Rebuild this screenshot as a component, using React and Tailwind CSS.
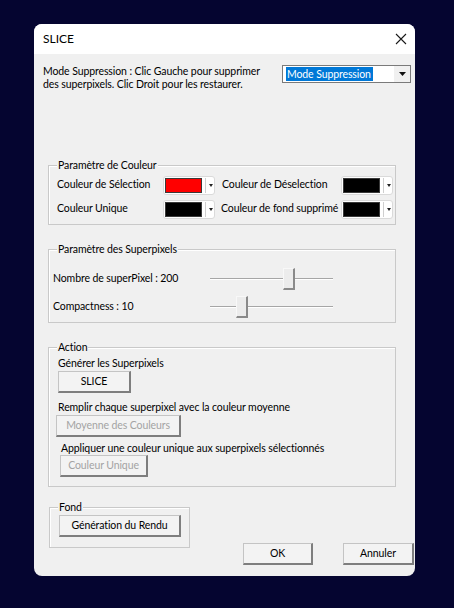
const Btn = ({ children, disabled, className = '' }) => (
  <div
    className={`h-[22px] flex items-center justify-center bg-[#f3f3f3] border-t border-l border-[#c4c4c4] border-r-2 border-b-2 border-r-[#7e7e7e] border-b-[#7e7e7e] ${disabled ? 'text-[#a3a3a3]' : 'text-black'} ${className}`}
  >
    {children}
  </div>
)

const Group = ({ title, className = '', children }) => (
  <div className={`relative border border-[#c9c9c9] shadow-[inset_1px_1px_0_#ffffff] ${className}`}>
    <span className="absolute -top-[7px] left-[8px] px-[1px] leading-[13px] bg-[#f0f0f0] whitespace-nowrap">
      {title}
    </span>
    {children}
  </div>
)

const Swatch = ({ color }) => (
  <div className="w-[52px] h-[19px] bg-white border border-[#dadada] rounded-[3px] flex items-center pl-[1px]">
    <div className={`w-[37px] h-[15px] border border-[#3a3a3a] ${color}`} />
    <div className="ml-[3px] w-px h-[15px] bg-[#cfcfcf]" />
    <svg width="4" height="3" viewBox="0 0 4 3" className="ml-[3px]">
      <path d="M0 0h4L2 3z" fill="#222" />
    </svg>
  </div>
)

const Slider = ({ thumb }) => (
  <div className="relative w-[123px] h-[22px] flex items-center">
    <div className="w-full h-[2px] border-t border-[#a6a6a6] border-b border-b-white" />
    <div
      className={`absolute top-0 ${thumb} w-[12px] h-[22px] bg-[#ececec] border-t border-l border-[#f8f8f8] border-r-2 border-b-2 border-r-[#8a8a8a] border-b-[#8a8a8a]`}
    />
  </div>
)

export default function App() {
  return (
    <div className="w-[454px] h-[608px] bg-[#050530] pt-[24px] pl-[34px] font-[Lato,sans-serif] text-[10.5px] tracking-[-0.1px] text-black">
      <div className="w-[381px] h-[552px] rounded-[8px] bg-[#f0f0f0] overflow-hidden flex flex-col">
        {/* Title bar */}
        <div className="h-[30px] shrink-0 bg-white flex items-center justify-between pl-[9px] pr-[8px]">
          <span className="text-[12px] tracking-normal">SLICE</span>
          <svg width="12" height="12" viewBox="0 0 12 12">
            <path d="M1 1L11 11M11 1L1 11" stroke="#1a1a1a" strokeWidth="1.1" />
          </svg>
        </div>

        <div className="flex flex-col pt-[11px]">
          {/* Mode row */}
          <div className="flex items-start pl-[9px] h-[26px]">
            <p className="w-[239px] leading-[13px] whitespace-nowrap">
              Mode Suppression : Clic Gauche pour supprimer
              <br />
              des superpixels. Clic Droit pour les restaurer.
            </p>
            <div className="w-[129px] h-[18px] bg-white border border-[#7a7a7a] flex items-center">
              <span className="ml-[3px] w-[87px] pl-[1px] leading-[14px] bg-[#0078d7] text-white whitespace-nowrap">
                Mode Suppression
              </span>
              <div className="ml-auto w-[16px] h-full bg-[#f0f0f0] flex items-center justify-center">
                <svg width="7" height="4" viewBox="0 0 7 4">
                  <path d="M0 0h7L3.5 4z" fill="#111" />
                </svg>
              </div>
            </div>
          </div>

          {/* Couleur */}
          <Group title="Paramètre de Couleur" className="mt-[74px] ml-[14px] w-[348px] h-[60px]">
            <div className="grid grid-cols-[106px_59px_119px_52px] auto-rows-[24px] items-center pt-[7px] pl-[8px]">
              <span className="whitespace-nowrap">Couleur de Sélection</span>
              <Swatch color="bg-[#ff0000]" />
              <span className="whitespace-nowrap">Couleur de Déselection</span>
              <Swatch color="bg-black" />
              <span className="whitespace-nowrap">Couleur Unique</span>
              <Swatch color="bg-black" />
              <span className="whitespace-nowrap -ml-px">Couleur de fond supprimé</span>
              <Swatch color="bg-black" />
            </div>
          </Group>

          {/* Superpixels */}
          <Group title="Paramètre des Superpixels" className="mt-[24px] ml-[14px] w-[348px] h-[74px]">
            <div className="flex flex-col pt-[15px] pl-[4px]">
              <div className="flex items-center h-[28px]">
                <span className="w-[157px] whitespace-nowrap">Nombre de superPixel : 200</span>
                <Slider thumb="left-[73px]" />
              </div>
              <div className="flex items-center h-[28px]">
                <span className="w-[157px] whitespace-nowrap">Compactness : 10</span>
                <Slider thumb="left-[26px]" />
              </div>
            </div>
          </Group>

          {/* Action */}
          <Group title="Action" className="mt-[24px] ml-[14px] w-[348px] h-[140px]">
            <div className="flex flex-col items-start pt-[8px]">
              <span className="ml-[9px] h-[14px] leading-[14px]">Générer les Superpixels</span>
              <Btn className="mt-px ml-[9px] w-[73px]">SLICE</Btn>
              <span className="mt-[7px] ml-[9px] h-[14px] leading-[14px]">
                Remplir chaque superpixel avec la couleur moyenne
              </span>
              <Btn disabled className="mt-px ml-[7px] w-[125px]">Moyenne des Couleurs</Btn>
              <span className="mt-[4px] ml-[12px] h-[14px] leading-[14px]">
                Appliquer une couleur unique aux superpixels sélectionnés
              </span>
              <Btn disabled className="ml-[11px] w-[88px]">Couleur Unique</Btn>
            </div>
          </Group>

          {/* Fond + buttons */}
          <div className="flex items-start mt-[20px] ml-[15px]">
            <Group title="Fond" className="w-[141px] h-[41px]">
              <div className="pt-[7px] pl-[9px]">
                <Btn className="w-[122px]">Génération du Rendu</Btn>
              </div>
            </Group>
            <Btn className="mt-[36px] ml-[53px] w-[70px]">OK</Btn>
            <Btn className="mt-[36px] ml-[30px] w-[71px]">Annuler</Btn>
          </div>
        </div>
      </div>
    </div>
  )
}
